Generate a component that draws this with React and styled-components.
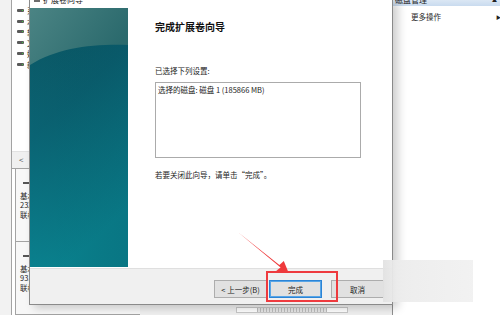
import React from "react";
import styled, { createGlobalStyle } from "styled-components";

const GlobalStyle = createGlobalStyle`
    html, body {
        margin: 0;
        padding: 0;
        background: #ffffff;
    }
    body {
        font-family: "Noto Sans CJK SC", "Noto Sans", sans-serif;
        color: #1f1f1f;
    }
`;

const Screen = styled.div`
    position: relative;
    width: 500px;
    height: 315px;
    overflow: hidden;
    display: flex;
    background: #ffffff;
`;

/* ---------- background window: left side ---------- */

const LeftPane = styled.div`
    width: 140px;
    display: flex;
    flex-shrink: 0;
`;

const Gutter = styled.div`
    width: 11px;
    background: #f2f2f2;
    border-right: 1px solid #a3a3a3;
`;

const ListColumn = styled.div`
    flex: 1;
    display: flex;
    flex-direction: column;
`;

const VolumeList = styled.div`
    height: 148px;
    padding-top: 5px;
    background: #ffffff;
    display: flex;
    flex-direction: column;
`;

const VolumeRow = styled.div`
    height: 10.8px;
    display: flex;
    align-items: center;
    gap: 3px;
    padding-left: 5px;
    font-size: 7.5px;
    white-space: nowrap;
`;

const DriveIcon = styled.span`
    position: relative;
    width: 7px;
    height: 3px;
    background: #5a5a5a;
    border-radius: 1px;
    flex-shrink: 0;
    &::after {
        content: "";
        position: absolute;
        right: 1px;
        top: 1px;
        width: 1px;
        height: 1px;
        background: #3fc43f;
    }
`;

const ScrollRow = styled.div`
    height: 16px;
    background: #f0f0f0;
    border-top: 1px solid #e2e2e2;
    border-bottom: 1px solid #a3a3a3;
    display: flex;
    align-items: center;
    padding-left: 7px;
    font-size: 8px;
    color: #555;
`;

const DiskBlock = styled.div`
    height: ${(p) => p.$h}px;
    margin-left: 3px;
    border-left: 1px solid #a3a3a3;
    border-bottom: 1px solid #a3a3a3;
    background: #f7f7f7;
    padding: 11px 0 0 4px;
    font-size: 7.5px;
    line-height: 9.6px;
    white-space: nowrap;
`;

const DiskDash = styled.div`
    width: 7px;
    height: 2px;
    margin: 2px 0 7px 3px;
    background: #555;
    border-right: 1px solid #3fc43f;
`;

/* ---------- background window: middle + right ---------- */

const Middle = styled.div`
    flex: 1;
    display: flex;
    flex-direction: column;
    justify-content: flex-end;
`;

const BottomStrip = styled.div`
    height: 10px;
    background: #f0f0f0;
    border-top: 1px solid #d8d8d8;
    display: flex;
    align-items: center;
    padding-left: 96px;
`;

const Track = styled.div`
    width: 110px;
    height: 4px;
    border: 1px solid #c8c8c8;
    background: #ffffff;
    display: flex;
    justify-content: center;
`;

const Thumb = styled.div`
    width: 70px;
    height: 4px;
    background: repeating-linear-gradient(90deg, #bdbdbd 0 1px, #e6e6e6 1px 3px);
`;

const ActionPane = styled.div`
    width: 107px;
    flex-shrink: 0;
    border-left: 1px solid #8f8f8f;
    background: #ffffff;
    display: flex;
    flex-direction: column;
`;

const PaneHeader = styled.div`
    height: 6px;
    overflow: hidden;
    background: linear-gradient(#dbe7f4, #c9dbef);
    display: flex;
    align-items: flex-end;
    justify-content: space-between;
    padding: 0 4px 0 2px;
    font-size: 8px;
    line-height: 13px;
`;

const ActionRow = styled.div`
    height: 20px;
    display: flex;
    align-items: center;
    justify-content: space-between;
    padding: 0 0 0 18px;
    font-size: 7.5px;
`;

const Caret = styled.span`
    font-size: 5px;
    color: #222;
    margin-right: -1px;
`;

/* ---------- wizard dialog ---------- */

const Dialog = styled.div`
    position: absolute;
    left: 29px;
    top: -1px;
    width: 362px;
    height: 304px;
    display: flex;
    flex-direction: column;
    border: 1px solid #8a8a8a;
    background: #ffffff;
    box-shadow: 5px 3px 9px rgba(0, 0, 0, 0.2);
`;

const TitleBar = styled.div`
    height: 8px;
    overflow: hidden;
    display: flex;
    align-items: flex-end;
    gap: 3px;
    padding-left: 4px;
    font-size: 8px;
    line-height: 17px;
    color: #222;
`;

const TitleIcon = styled.span`
    width: 6px;
    height: 2px;
    background: #6d6d6d;
    margin-bottom: 6px;
`;

const Body = styled.div`
    flex: 1;
    display: flex;
`;

const Banner = styled.div`
    width: 98px;
    flex-shrink: 0;
    svg {
        display: block;
    }
`;

const Content = styled.div`
    flex: 1;
    padding: 13px 0 0 27px;
    display: flex;
    flex-direction: column;
    font-size: 7.5px;
    line-height: 10px;
    color: #222;
`;

const Heading = styled.div`
    font-size: 10px;
    line-height: 12px;
    font-weight: 700;
    color: #111;
`;

const Label = styled.div`
    margin-top: ${(p) => p.$top}px;
`;

const SummaryBox = styled.div`
    margin-top: 6px;
    width: 200px;
    height: 70px;
    border: 1px solid #ababab;
    padding: 2px 2px;
    box-sizing: content-box;
`;

const ButtonBar = styled.div`
    height: 36px;
    background: #f0f0f0;
    border-top: 1px solid #dfdfdf;
    display: flex;
    justify-content: flex-end;
    align-items: flex-start;
    padding: 11px 8px 0 0;
    box-sizing: border-box;
`;

const Button = styled.div`
    width: 53px;
    height: 18px;
    box-sizing: border-box;
    margin-left: ${(p) => p.$gap}px;
    border: ${(p) => (p.$primary ? "1px solid #2b84d6" : "1px solid #adadad")};
    box-shadow: ${(p) => (p.$primary ? "inset 0 0 0 1px #58a5e6" : "none")};
    background: #e1e1e1;
    display: flex;
    align-items: center;
    justify-content: center;
    font-size: 7.5px;
    color: #222;
`;

/* ---------- annotations ---------- */

const Highlight = styled.div`
    position: absolute;
    left: 266px;
    top: 271px;
    width: 72px;
    height: 31px;
    box-sizing: border-box;
    border: 2px solid #ee3a3e;
`;

const ArrowLayer = styled.svg`
    position: absolute;
    left: 0;
    top: 0;
    pointer-events: none;
`;

const Watermark = styled.div`
    position: absolute;
    left: 383px;
    top: 260px;
    width: 90px;
    height: 42px;
    background: linear-gradient(90deg, rgba(226, 226, 226, 0.95) 0, rgba(236, 236, 236, 0.95) 14px, rgba(240, 240, 240, 0.9) 100%);
`;

const volumes = ["系统保留", "本地磁盘 (C:)", "软件 (D:)", "文档 (E:)", "娱乐 (F:)", "新加卷 (G:)"];

function BannerArt() {
    return (
        <svg width="98" height="259" viewBox="0 0 98 259">
            <defs>
                <linearGradient id="deep" x1="0" y1="0" x2="0.35" y2="1">
                    <stop offset="0" stopColor="#0b5562" />
                    <stop offset="0.45" stopColor="#0a6474" />
                    <stop offset="1" stopColor="#0a8794" />
                </linearGradient>
                <linearGradient id="cap" x1="0" y1="0" x2="1" y2="0.4">
                    <stop offset="0" stopColor="#4b8484" />
                    <stop offset="1" stopColor="#2b6a6d" />
                </linearGradient>
                <linearGradient id="shade" x1="0" y1="0" x2="1" y2="0">
                    <stop offset="0" stopColor="#000" stopOpacity="0" />
                    <stop offset="1" stopColor="#052a3a" stopOpacity="0.18" />
                </linearGradient>
            </defs>
            <rect width="98" height="259" fill="url(#deep)" />
            <rect width="98" height="259" fill="url(#shade)" />
            <path d="M0 0 H98 V37 C60 36 28 40 0 57 Z" fill="url(#cap)" />
        </svg>
    );
}

export default function App() {
    return (
        <>
            <GlobalStyle />
            <Screen>
                <LeftPane>
                    <Gutter />
                    <ListColumn>
                        <VolumeList>
                            {volumes.map((v) => (
                                <VolumeRow key={v}>
                                    <DriveIcon />
                                    {v}
                                </VolumeRow>
                            ))}
                        </VolumeList>
                        <ScrollRow>&lt;</ScrollRow>
                        <DiskBlock $h={62}>
                            <DiskDash />
                            <div>基本</div>
                            <div>232.88 GB</div>
                            <div>联机</div>
                        </DiskBlock>
                        <DiskBlock $h={62}>
                            <DiskDash />
                            <div>基本</div>
                            <div>931.51 GB</div>
                            <div>联机</div>
                        </DiskBlock>
                    </ListColumn>
                </LeftPane>

                <Middle>
                    <BottomStrip>
                        <Track>
                            <Thumb />
                        </Track>
                    </BottomStrip>
                </Middle>

                <ActionPane>
                    <PaneHeader>
                        <span>磁盘管理</span>
                        <Caret>▲</Caret>
                    </PaneHeader>
                    <ActionRow>
                        <span>更多操作</span>
                        <Caret>▶</Caret>
                    </ActionRow>
                </ActionPane>

                <Dialog>
                    <TitleBar>
                        <TitleIcon />
                        <span>扩展卷向导</span>
                    </TitleBar>
                    <Body>
                        <Banner>
                            <BannerArt />
                        </Banner>
                        <Content>
                            <Heading>完成扩展卷向导</Heading>
                            <Label $top={33}>已选择下列设置:</Label>
                            <SummaryBox>选择的磁盘: 磁盘 1 (185866 MB)</SummaryBox>
                            <Label $top={12}>若要关闭此向导，请单击“完成”。</Label>
                        </Content>
                    </Body>
                    <ButtonBar>
                        <Button $gap={0}>&lt; 上一步(B)</Button>
                        <Button $gap={2} $primary>
                            完成
                        </Button>
                        <Button $gap={9}>取消</Button>
                    </ButtonBar>
                </Dialog>

                <Highlight />
                <ArrowLayer width="500" height="315" viewBox="0 0 500 315">
                    <polygon
                        points="238.4,232.6 239.6,233.4 280.6,267.4 276.2,270.8 288.5,272.5 283.8,261.0 279.4,265.0"
                        fill="#ef3a3c"
                    />
                </ArrowLayer>
                <Watermark />
            </Screen>
        </>
    );
}
